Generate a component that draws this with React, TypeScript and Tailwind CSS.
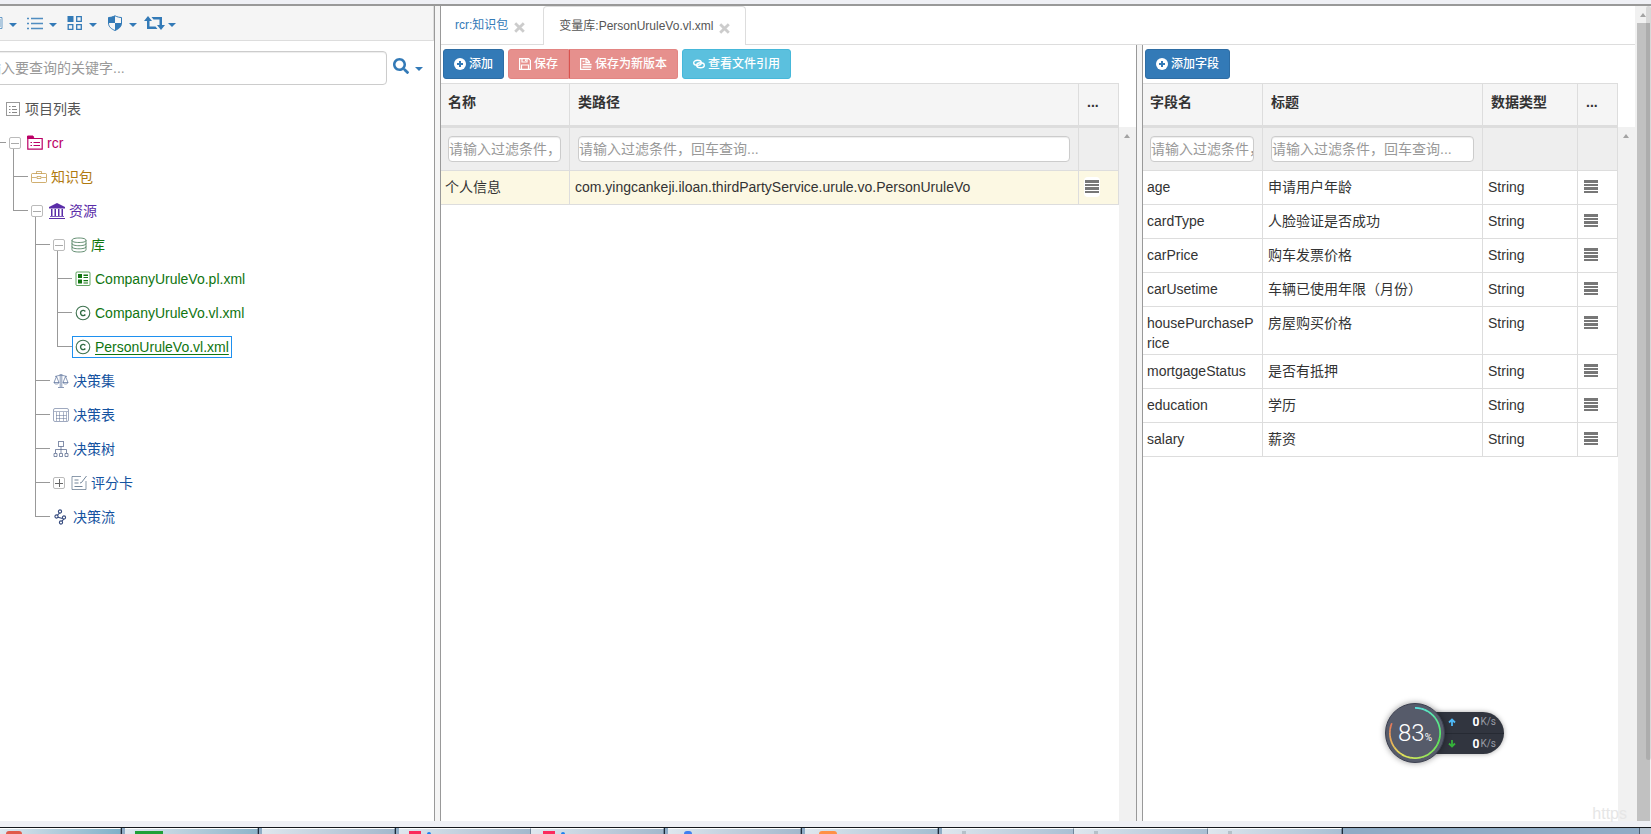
import React from "react";
import { FaSearch } from "react-icons/fa";

type IconName =
  | "list"
  | "folder"
  | "case"
  | "bank"
  | "db"
  | "params"
  | "copyright"
  | "scale"
  | "sheet"
  | "tree"
  | "score"
  | "flow"
  | "window"
  | "lines"
  | "grid"
  | "shield";

function Icon({ name }: { name: IconName }) {
  const shapes: Record<IconName, React.ReactNode> = {
    list: (
      <>
        <rect x="1.5" y="1.5" width="13" height="13" strokeOpacity=".6" />
        <path d="M4 5.5h1.5M4 8.5h1.5M4 11.5h1.5M7 5.5h4M7 8.5h5M7 11.5h5" strokeOpacity=".7" />
      </>
    ),
    folder: (
      <>
        <path d="M.8 3.5V14.2H15.2V3.5Z" strokeWidth="1.2" />
        <path d="M.5 1h5.5l1 2.5H.5z" fill="currentColor" />
        <path d="M3.5 7.5h1.5M3.5 10.5h1.5M6.5 7.5H13M6.5 10.5H13" strokeWidth="1.1" />
      </>
    ),
    case: (
      <>
        <rect x=".5" y="4.5" width="15" height="9" rx="1" strokeOpacity=".6" />
        <path d="M5.5 4.5v-2h5v2M1 8.5h4.5M10.5 8.5H15M6 7.5h4v2H6z" strokeOpacity=".55" />
      </>
    ),
    bank: (
      <path
        d="M8 0 16 4v1.5H0V4zM2 6h1.500v7H2zM5.500 6H7v7H5.500zM9 6h1.500v7H9zM12.500 6H14v7h-1.500zM1 13.200h14v.9H1zM0 15h16v1H0z"
        fill="currentColor"
        stroke="none"
      />
    ),
    db: (
      <path
        d="M1 3.3C1 1.8 4 1 8 1s7 .8 7 2.3S12 5.5 8 5.5 1 4.800 1 3.300v9.400C1 14.200 4 15 8 15s7-.8 7-2.300V3.300M1 6.500c0 1.400 3 2.200 7 2.200s7-.8 7-2.200M1 9.600c0 1.400 3 2.200 7 2.200s7-.8 7-2.200"
        stroke="#3f7350"
        strokeOpacity=".8"
      />
    ),
    params: (
      <>
        <rect x="1" y="1" width="14" height="13.5" rx="1" strokeOpacity=".65" />
        <path
          d="M3 3h4v4H3zM3 8.500h4v4H3zM8.500 3.500H13V5H8.500zM8.500 6H13v1H8.500zM8.500 9H13v1.200H8.500zM8.500 11.500H13v1H8.500z"
          fill="currentColor"
          stroke="none"
        />
      </>
    ),
    copyright: (
      <>
        <circle cx="8" cy="8" r="6.8" strokeWidth="1.1" stroke="#3f7350" />
        <path d="M10.3 6.500A2.600 2.600 0 1 0 10.300 9.500" strokeWidth="1.400" stroke="#2f6b42" />
      </>
    ),
    scale: (
      <path
        d="M5 14.500h6M2 3.500 8 2l6 1.500M3.500 3.500 1 9.500h5zM12.500 3.500 10 9.500h5zM1 9.500c.5 2 4.500 2 5 0M10 9.500c.5 2 4.500 2 5 0M7.200 1v13M8.800 1v13"
        stroke="#4a6390"
        strokeOpacity=".65"
      />
    ),
    sheet: (
      <>
        <rect x=".5" y="1.5" width="15" height="13" rx="1.500" stroke="#5f7094" strokeOpacity=".6" />
        <path
          d="M1 4.500h14M3 8.500h10.500M3 11.500h10.500M3.500 5v9M6.500 5v9M10.500 5v9M13.500 5v9"
          stroke="#5f7094"
          strokeOpacity=".5"
        />
      </>
    ),
    tree: (
      <g stroke="#4f5f86" strokeOpacity=".7">
        <rect x="5.5" y=".5" width="5" height="5" />
        <path d="M8 5.500V12M2.500 12V8.500h11V12" />
        <path d="M1 12.500h3v3H1zM6.500 12.500h3v3h-3zM12 12.500h3v3h-3z" />
      </g>
    ),
    score: (
      <g stroke="#4f6680">
        <path d="M10 1.500H1v13h14V6" strokeOpacity=".65" />
        <path d="m15.500 1-5 6.500-1.500.5M3.500 5h4M3.500 8h4M3.500 11.500h8" strokeOpacity=".8" />
      </g>
    ),
    flow: (
      <g stroke="#33487c" strokeWidth="1.100">
        <circle cx="7" cy="2.500" r="1.600" />
        <circle cx="3.500" cy="7.500" r="1.600" />
        <circle cx="11" cy="8.500" r="1.600" />
        <circle cx="8" cy="13.500" r="1.600" />
        <path d="M6.500 4 4.500 6.200M5 8.200 9.500 9.500M10.800 10 9 12.200" />
      </g>
    ),
    window: <path d="M1 2.500h14v11H1zM13 4v8" strokeOpacity=".7" />,
    lines: <path d="M0 3.500h2M0 8.500h2M0 13.500h2M4 3.500h12M4 8.500h12M4 13.500h12" strokeOpacity=".85" strokeWidth="1.300" />,
    grid: (
      <>
        <path d="M.5 1h6v6h-6z" fill="currentColor" stroke="none" />
        <path d="M9.700 1.700h4.600v4.600H9.700zM1.200 9.700h4.600v4.600H1.200zM9.700 9.700h4.600v4.600H9.700z" strokeWidth="1.300" />
      </>
    ),
    shield: (
      <>
        <path d="M8 .8C5.500 2 3.500 2.500 1.500 2.500V8c0 4 3 6 6.500 7.500C11.500 14 14.500 12 14.500 8V2.500C12.500 2.500 10.500 2 8 .8z" />
        <path
          d="M8 .8C5.500 2 3.500 2.500 1.500 2.500V8H8v7.500C11.500 14 14.500 12 14.500 8H8z"
          fill="currentColor"
          stroke="none"
        />
      </>
    ),
  };
  return (
    <svg viewBox="0 0 16 16" className="size-4 shrink-0" fill="none" stroke="currentColor" aria-hidden="true">
      {shapes[name]}
    </svg>
  );
}

function RetweetIcon() {
  return (
    <svg viewBox="0 0 21 16" className="h-4 w-[21px] shrink-0" fill="currentColor" aria-hidden="true">
      <path d="M4 1 8 6H5.500v5.500h6l2 2.500H3V6H0zM7.500 2H18v8h3l-4 5-4-5h2.500V4.500h-6z" />
    </svg>
  );
}

function Caret() {
  return <span className="mt-[5px] border-x-4 border-t-4 border-x-transparent border-t-current" />;
}

function AlignIcon() {
  return (
    <svg viewBox="0 0 14 14" className="size-3.5" fill="#777" shapeRendering="crispEdges" aria-hidden="true">
      <path d="M0 0h14v3H0zM0 4h14v2H0zM0 7h14v3H0zM0 11h14v2H0z" />
    </svg>
  );
}

function PlusCircle() {
  return (
    <svg viewBox="0 0 12 12" className="size-3" aria-hidden="true">
      <circle cx="6" cy="6" r="6" fill="#fff" />
      <path d="M6 3v6M3 6h6" stroke="#337ab7" strokeWidth="2" />
    </svg>
  );
}

function CloseIcon() {
  return (
    <svg viewBox="0 0 11 11" className="mt-1 size-[11px]" stroke="#ccc" strokeWidth="2.800" aria-hidden="true">
      <path d="m1.200 1.200 8.600 8.600M9.800 1.200 1.200 9.800" />
    </svg>
  );
}

type TreeNode = {
  label: string;
  icon: IconName;
  color: string;
  open?: boolean;
  selected?: boolean;
  children?: TreeNode[];
};

const green = "text-[#107510]";
const blue = "text-[#1553a0]";

const project: TreeNode = {
  label: "rcr",
  icon: "folder",
  color: "text-[#bb0066]",
  open: true,
  children: [
    { label: "知识包", icon: "case", color: "text-[#b07a10]" },
    {
      label: "资源",
      icon: "bank",
      color: "text-[#5a2ca8]",
      open: true,
      children: [
        {
          label: "库",
          icon: "db",
          color: green,
          open: true,
          children: [
            { label: "CompanyUruleVo.pl.xml", icon: "params", color: green },
            { label: "CompanyUruleVo.vl.xml", icon: "copyright", color: green },
            { label: "PersonUruleVo.vl.xml", icon: "copyright", color: green, selected: true },
          ],
        },
        { label: "决策集", icon: "scale", color: blue },
        { label: "决策表", icon: "sheet", color: blue },
        { label: "决策树", icon: "tree", color: blue },
        { label: "评分卡", icon: "score", color: blue, open: false },
        { label: "决策流", icon: "flow", color: blue },
      ],
    },
  ],
};

function TreeItem({ node, last }: { node: TreeNode; last: boolean }) {
  const hasToggle = node.open !== undefined;
  return (
    <li className="relative">
      <span className={`absolute -top-[11px] -left-[18px] w-px bg-[#999] ${last ? "h-7" : "bottom-0"}`} />
      <span className="absolute top-4 -left-[18px] h-px w-[15px] bg-[#999]" />
      <div className="flex h-[34px] items-center gap-[3px]">
        {hasToggle && (
          <button
            type="button"
            aria-label={node.open ? "收起" : "展开"}
            className="relative z-10 flex size-3 items-center justify-center rounded-[2px] border border-[#bbb] bg-white"
          >
            <span className={`h-px w-2 ${node.open ? "bg-[#aaa]" : "bg-[#666]"}`} />
            {!node.open && <span className="absolute h-2 w-px bg-[#666]" />}
          </button>
        )}
        <a
          href="#"
          className={`${hasToggle ? "" : "-ml-[3px]"} flex h-[22px] items-center gap-1 border px-0.5 ${node.color} ${
            node.selected ? "border-[#1e90ef]" : "border-transparent"
          }`}
        >
          <Icon name={node.icon} />
          <span className={node.selected ? "underline underline-offset-2" : ""}>{node.label}</span>
        </a>
      </div>
      {node.children && (
        <ul className="ml-[22px]">
          {node.children.map((child, i) => (
            <TreeItem key={child.label} node={child} last={i === node.children!.length - 1} />
          ))}
        </ul>
      )}
    </li>
  );
}

const toolbar: { label: string; icon: IconName | "retweet"; width: string }[] = [
  { label: "项目", icon: "window", width: "w-10" },
  { label: "分类", icon: "lines", width: "w-10" },
  { label: "视图", icon: "grid", width: "w-10" },
  { label: "权限", icon: "shield", width: "w-[37px]" },
  { label: "同步", icon: "retweet", width: "w-10" },
];

function Sidebar() {
  return (
    <aside className="w-[435px] shrink-0 overflow-hidden border-r border-[#999]">
      <div className="flex h-[35px] border-r border-b border-[#ddd] bg-[#f5f5f5] pb-px text-[#337ab7]">
        <div className="-ml-[13px] flex">
          {toolbar.map((t) => (
            <button
              key={t.label}
              type="button"
              aria-label={t.label}
              className={`flex items-center ${t.icon === "retweet" ? "gap-[3px]" : "gap-1.5"} ${t.width}`}
            >
              {t.icon === "retweet" ? <RetweetIcon /> : <Icon name={t.icon} />}
              <Caret />
            </button>
          ))}
        </div>
      </div>
      <div className="mt-2.5 -ml-10 flex items-center gap-1.5">
        <input
          type="text"
          aria-label="查询关键字"
          placeholder="请输入要查询的关键字..."
          className="h-[34px] w-[427px] rounded border border-[#ccc] px-3 shadow-[inset_0_1px_1px_rgba(0,0,0,0.075)] placeholder:text-[#999]"
        />
        <button type="button" aria-label="查询" className="flex items-center gap-1.5 pb-1 text-[#337ab7]">
          <FaSearch className="size-4" />
          <Caret />
        </button>
      </div>
      <div className="mt-[7px] flex h-[34px] items-center gap-1 pl-[5px] text-[#555]">
        <Icon name="list" />
        项目列表
      </div>
      <ul className="ml-[9px]">
        <TreeItem node={project} last />
      </ul>
    </aside>
  );
}

const headCell = "border-r border-b-3 border-[#ddd] border-t border-t-[#ddd] bg-[#f5f5f5] px-2 pt-2 text-left align-top font-bold first:pl-[7px]";
const filterCell = "border-r border-b border-[#ddd] bg-[#eee] pr-2 pl-2 first:pl-[7px]";
const bodyCell = "h-[34px] border-r border-b border-[#ddd] px-[5px] pt-1.5 pb-px align-top break-all first:pl-1";

function Filter({ label }: { label: string }) {
  return (
    <input
      type="text"
      aria-label={label}
      placeholder="请输入过滤条件，回车查询..."
      className="block h-[26px] w-full rounded border border-[#ccc] bg-white px-0 shadow-[inset_0_1px_1px_rgba(0,0,0,0.075)] placeholder:text-[#999]"
    />
  );
}

type GridProps = {
  columns: { title: string; width: string; filter?: boolean }[];
  rows: string[][];
  highlight?: boolean;
};

function Grid({ columns, rows, highlight }: GridProps) {
  return (
    <div className="flex min-h-0 flex-1">
      <div className="min-w-0 flex-1">
        <table className="w-full table-fixed border-separate border-spacing-0">
          <colgroup>
            {columns.map((c) => (
              <col key={c.title} className={c.width} />
            ))}
          </colgroup>
          <thead>
            <tr className="h-[45px]">
              {columns.map((c) => (
                <th key={c.title} className={headCell}>
                  {c.title}
                </th>
              ))}
            </tr>
            <tr className="h-[43px]">
              {columns.map((c) => (
                <td key={c.title} className={filterCell}>
                  {c.filter && <Filter label={c.title} />}
                </td>
              ))}
            </tr>
          </thead>
          <tbody className={highlight ? "bg-[#fcf8e3]" : "bg-white"}>
            {rows.map((row) => (
              <tr key={row[0]}>
                {row.map((value, i) => (
                  <td key={i} className={bodyCell}>
                    {value}
                  </td>
                ))}
                <td className={bodyCell}>
                  <button
                    type="button"
                    aria-label="操作"
                    className="flex h-5 w-4 items-center justify-center rounded-sm bg-white"
                  >
                    <AlignIcon />
                  </button>
                </td>
              </tr>
            ))}
          </tbody>
        </table>
      </div>
      <div className="mt-11 flex w-[17px] shrink-0 justify-center bg-[#f1f1f1] pt-[7px] pr-px">
        <span className="h-0 border-x-[3px] border-b-4 border-x-transparent border-b-[#a3a3a3]" />
      </div>
    </div>
  );
}

const variableColumns = [
  { title: "名称", width: "w-[129px]", filter: true },
  { title: "类路径", width: "w-auto", filter: true },
  { title: "...", width: "w-10" },
];

const fieldColumns = [
  { title: "字段名", width: "w-[120px]", filter: true },
  { title: "标题", width: "w-auto", filter: true },
  { title: "数据类型", width: "w-[95px]" },
  { title: "...", width: "w-10" },
];

const variables = [["个人信息", "com.yingcankeji.iloan.thirdPartyService.urule.vo.PersonUruleVo"]];

const fields = [
  ["age", "申请用户年龄", "String"],
  ["cardType", "人脸验证是否成功", "String"],
  ["carPrice", "购车发票价格", "String"],
  ["carUsetime", "车辆已使用年限（月份）", "String"],
  ["housePurchasePrice", "房屋购买价格", "String"],
  ["mortgageStatus", "是否有抵押", "String"],
  ["education", "学历", "String"],
  ["salary", "薪资", "String"],
];

const button = "flex h-[30px] items-center gap-[3px] border px-2.5 text-xs font-medium text-white";

function Editor() {
  return (
    <main className="flex min-w-0 flex-1 flex-col">
      <nav className="flex h-[39px] shrink-0 text-xs">
        <div className="flex items-center gap-1.5 border-b border-[#ddd] pr-[18px] pl-3.5">
          <a href="#" className="pb-px text-[#337ab7]">
            rcr:知识包
          </a>
          <button type="button" aria-label="关闭 rcr:知识包">
            <CloseIcon />
          </button>
        </div>
        <div className="flex items-center gap-1.5 rounded-t border border-b-0 border-[#ddd] px-[15px] text-[#555]">
          <a href="#" className="pb-px">
            变量库:PersonUruleVo.vl.xml
          </a>
          <button type="button" aria-label="关闭 变量库">
            <CloseIcon />
          </button>
        </div>
        <div className="flex-1 border-b border-[#ddd]" />
      </nav>
      <div className="flex min-h-0 flex-1">
        <section className="flex min-w-0 flex-[695] flex-col">
          <div className="flex h-[38px] shrink-0 gap-1 px-0.5 pt-1">
            <button type="button" className={`${button} rounded-[3px] border-[#2e6da4] bg-[#337ab7]`}>
              <PlusCircle />
              添加
            </button>
            <div className="flex">
              <button type="button" className={`${button} rounded-l-[3px] border-[#e38583] bg-[#e6908d] text-[#fbe9e8]`}>
                <svg viewBox="0 0 12 12" className="size-3" fill="none" stroke="currentColor" strokeWidth="1.200" aria-hidden="true">
                  <path d="M.6.6h9L11.400 2.400v9H.6zM3 .6v3.400h5V.6M2.500 11.400V7h7v4.400M6.500 1.500V3" />
                </svg>
                保存
              </button>
              <button
                type="button"
                className={`${button} rounded-r-[3px] border-[#e38583] border-l-[#d9534f] bg-[#e6908d] text-[#fbe9e8]`}
              >
                <svg viewBox="0 0 12 12" className="size-3" fill="none" stroke="currentColor" strokeWidth="1.300" aria-hidden="true">
                  <path d="M8 11.400H.6V.6H6.500L9.500 4M6 .6V4.500h4M2.500 3.500h2M2.500 6.500h9M2.500 9h9M8 11.400h3" />
                </svg>
                保存为新版本
              </button>
            </div>
            <button type="button" className={`${button} rounded-[3px] border-[#46b8da] bg-[#5bc0de]`}>
              <svg viewBox="0 0 12 12" className="size-3" fill="none" stroke="currentColor" strokeWidth="1.400" aria-hidden="true">
                <ellipse cx="4.500" cy="4.800" rx="3.800" ry="2.500" />
                <ellipse cx="7.500" cy="7.300" rx="3.800" ry="2.500" />
              </svg>
              查看文件引用
            </button>
          </div>
          <Grid columns={variableColumns} rows={variables} highlight />
        </section>
        <div className="w-[7px] shrink-0 border-x border-[#999] bg-[#f5f5f5]" />
        <section className="flex min-w-0 flex-[492] flex-col">
          <div className="flex h-[38px] shrink-0 px-0.5 pt-1">
            <button type="button" className={`${button} rounded-[3px] border-[#2e6da4] bg-[#337ab7]`}>
              <PlusCircle />
              添加字段
            </button>
          </div>
          <Grid columns={fieldColumns} rows={fields} />
        </section>
      </div>
    </main>
  );
}

function PageScrollbars() {
  return (
    <div className="relative flex w-4 shrink-0 flex-col items-center bg-[#f1f1f1]">
      <span className="mt-[7px] mb-1.5 border-x-[3px] border-b-4 border-x-transparent border-b-[#a3a3a3]" />
      <span className="w-[13px] flex-1 bg-[#c1c1c1]" />
      <span className="absolute top-0 right-0 h-[754px] w-[5px] rounded bg-black/10" />
    </div>
  );
}

const arcSteps = Array.from({ length: 40 }, (_, i) => i);

function SpeedWidget() {
  return (
    <div className="absolute right-[147px] bottom-[71px] flex items-center font-['Roboto','Noto_Sans',sans-serif]">
      <div className="relative z-10 flex size-[60px] items-center justify-center rounded-full border border-[#3c4050] bg-[#565b6a] text-white shadow-[0_0_6px_rgba(0,0,0,0.4)]">
        <svg viewBox="0 0 60 60" className="absolute inset-0 -rotate-90" fill="none" aria-hidden="true">
          {arcSteps.map((i) => (
            <circle
              key={i}
              cx="30"
              cy="30"
              r="26"
              stroke={`hsl(${178 - i * 4.2} 75% 63%)`}
              strokeWidth="1.800"
              pathLength="100"
              strokeDasharray="2.200 97.800"
              strokeDashoffset={-i * 2.03}
            />
          ))}
        </svg>
        <span className="text-2xl font-light">83</span>
        <span className="mt-2.5 text-[10px]">%</span>
      </div>
      <div className="-ml-[30px] flex h-[42px] w-[89px] flex-col rounded-r-full bg-[#31353f] pl-[30px] text-white shadow-[0_0_5px_rgba(0,0,0,0.35)]">
        {["#4db8f5", "#35b33a"].map((color, i) => (
          <div key={color} className={`flex flex-1 items-center pr-2 pl-[3px] ${i === 0 ? "border-b border-[#262a33]" : ""}`}>
            <svg viewBox="0 0 8 8" className={`size-2 ${i === 1 ? "rotate-180" : ""}`} fill="none" stroke={color} strokeWidth="1.800" aria-hidden="true">
              <path d="M4 8V1.500M1 4.500l3-3 3 3" />
            </svg>
            <span className="ml-auto text-xs font-bold">0</span>
            <span className="ml-px text-[10px] text-[#9a9da6]">K/s</span>
          </div>
        ))}
      </div>
    </div>
  );
}

const tasks = [
  { width: "w-[121px]", tint: "to-[#7fb0c8]", mark: "ml-1.5 w-4 rounded-t-full bg-[#e05a4a]", gap: true },
  { width: "w-[133px]", tint: "to-[#8db4c9]", mark: "ml-2.5 w-7 bg-[#1fa038]", gap: true },
  { width: "w-[133px]", tint: "to-[#a3b8cc]", mark: "", gap: true },
  { width: "w-[132px]", tint: "to-[#a3b8cc]", mark: "ml-2.5 w-3 bg-[#fb2a5c]", dot: true },
  { width: "w-[133px]", tint: "to-[#a3b8cc]", mark: "ml-3 w-3 bg-[#fb2a5c]", dot: true, gap: true },
  { width: "w-[133px]", tint: "to-[#a3b8cc]", mark: "ml-4 w-2 rounded-t-full bg-[#3f7ff0]", gap: true },
  { width: "w-[133px]", tint: "to-[#a3bdd0]", mark: "ml-3.5 w-[18px] rounded-t-full bg-[#ff9045]", gap: true },
  { width: "w-[132px]", tint: "to-[#a9bfd3]", mark: "ml-5 w-1 bg-[#b4c0c8]" },
  { width: "w-[134px]", tint: "to-[#a9bfd3]", mark: "ml-5 w-1 bg-[#b4c0c8]" },
  { width: "w-[134px]", tint: "to-[#a9bfd3]", mark: "ml-5 w-1 bg-[#b4c0c8]", gap: true },
];

function Taskbar() {
  return (
    <footer className="flex h-[7px] shrink-0 overflow-hidden border-t border-[#15181d] bg-[#8fabc5]">
      {tasks.map((t, i) => (
        <div
          key={i}
          className={`flex shrink-0 items-end border-t border-r border-t-white border-r-[#70869b] bg-linear-to-r from-[#dfe7ee] ${t.tint} ${t.width} ${
            t.gap ? "mr-1 shadow-[1px_0_0_#1d2a38]" : ""
          }`}
        >
          <span className={`h-[3px] ${t.mark}`} />
          {t.dot && <span className="ml-1.5 h-0.5 w-1 rounded-t-full bg-[#1c80f0]" />}
        </div>
      ))}
      <div className="ml-auto w-3 border-l border-[#4c5d70] bg-[#b4c1cf]" />
    </footer>
  );
}

export default function App() {
  return (
    <div className="relative flex h-screen flex-col overflow-hidden bg-white font-['Liberation_Sans','Noto_Sans_CJK_SC',sans-serif] text-sm leading-5 text-[#333]">
      <div className="h-1.5 shrink-0 border-b-2 border-[#999] bg-[#eff0f5]" />
      <div className="flex min-h-0 flex-1">
        <Sidebar />
        <div className="w-[6px] shrink-0 border-r border-[#999] bg-[#f5f5f5]" />
        <Editor />
        <PageScrollbars />
      </div>
      <div className="h-1.5 shrink-0 bg-[#eff0f5]" />
      <Taskbar />
      <SpeedWidget />
      <span className="absolute right-6 bottom-2 text-base text-[#e6e6e6]">https</span>
    </div>
  );
}
